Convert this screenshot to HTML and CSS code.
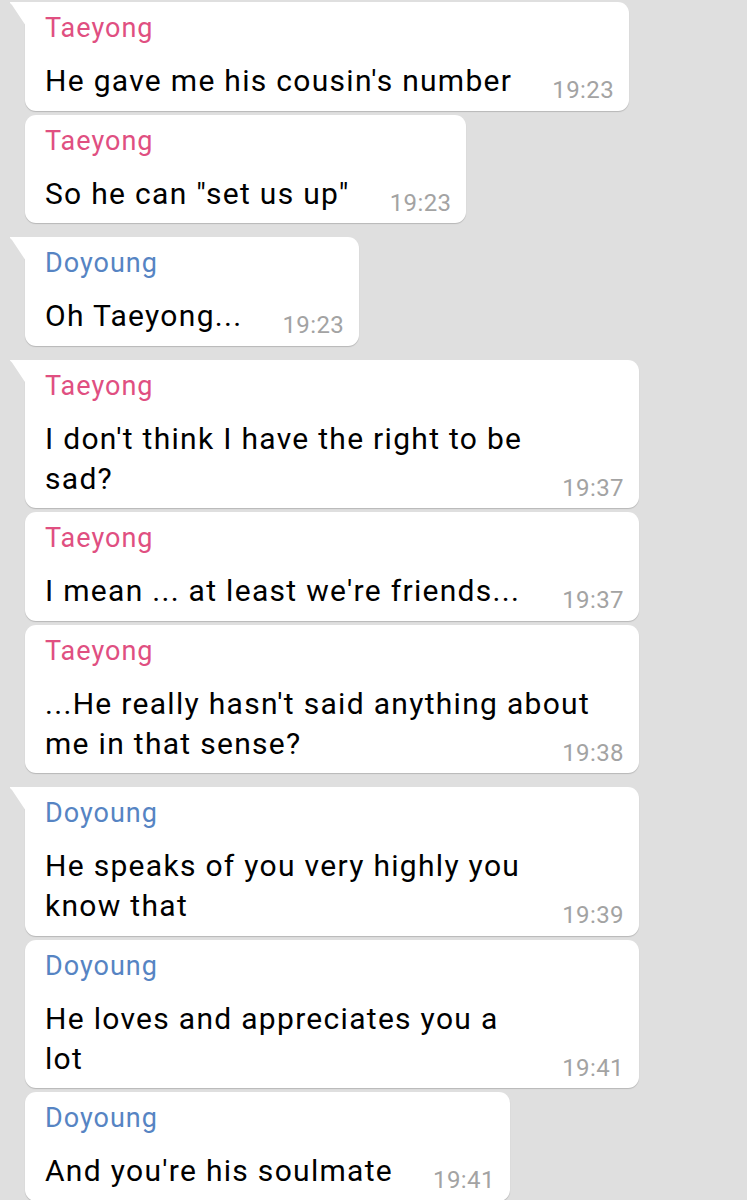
FILE: index.html
```html
<!doctype html>
<html lang="en">
<head>

<meta charset="utf-8">

<title>Chat</title>

<link rel="stylesheet" href="styles.css">

</head>
<body>

<div class="chat">
	<div class="msg --first --pink">
		<div class="name">Taeyong</div>
		<div class="text">He gave me his cousin's number<span class="time">19:23</span></div>
	</div>
	<div class="msg --pink">
		<div class="name">Taeyong</div>
		<div class="text">So he can "set us up"<span class="time">19:23</span></div>
	</div>

	<div class="msg --first --blue">
		<div class="name">Doyoung</div>
		<div class="text">Oh Taeyong...<span class="time">19:23</span></div>
	</div>

	<div class="msg --first --pink --wide">
		<div class="name">Taeyong</div>
		<div class="text">I don't think I have the right to be<br>sad?<span class="time">19:37</span></div>
	</div>
	<div class="msg --pink --wide">
		<div class="name">Taeyong</div>
		<div class="text">I mean ... at least we're friends...<span class="time">19:37</span></div>
	</div>
	<div class="msg --pink --wide">
		<div class="name">Taeyong</div>
		<div class="text">...He really hasn't said anything about<br>me in that sense?<span class="time">19:38</span></div>
	</div>

	<div class="msg --first --blue --wide">
		<div class="name">Doyoung</div>
		<div class="text">He speaks of you very highly you<br>know that<span class="time">19:39</span></div>
	</div>
	<div class="msg --blue --wide">
		<div class="name">Doyoung</div>
		<div class="text">He loves and appreciates you a<br>lot<span class="time">19:41</span></div>
	</div>
	<div class="msg --blue">
		<div class="name">Doyoung</div>
		<div class="text">And you're his soulmate<span class="time">19:41</span></div>
	</div>
</div>

</body>
</html>
```

FILE: styles.css
```css
html, body {
	margin: 0;
	padding: 0;
	background: #dfdfdf;
}

body {
	font-family: Roboto, "Liberation Sans", sans-serif;
	color: #000;
	overflow: hidden;
}

.chat {
	display: flex;
	flex-direction: column;
	align-items: flex-start;
	padding: 2px 0 0 25px;
}

.msg {
	position: relative;
	display: inline-block;
	box-sizing: border-box;
	max-width: 614px;
	margin-top: 4px;
	padding: 9px 15px 9.5px 20px;
	background: #fff;
	border-radius: 11px;
	box-shadow: 0 1px 1px rgba(0, 0, 0, 0.18);
}

.msg.--first {
	margin-top: 14px;
	border-top-left-radius: 0;
}
.msg.--first:first-child {
	margin-top: 0;
}

/* little tail on the first bubble of a group */
.msg.--first::before {
	content: "";
	position: absolute;
	top: 0;
	left: -15px;
	width: 16px;
	height: 24px;
	background: #fff;
	clip-path: polygon(0 0, 100% 0, 100% 100%, 2px 3px, 0 1px);
}

.msg.--wide {
	width: 614px;
}

.name {
	font-size: 27px;
	line-height: 34px;
	letter-spacing: 1px;
	margin-bottom: 16px;
	white-space: nowrap;
}

.--pink .name {
	color: #e04f81;
}
.--blue .name {
	color: #5684c3;
}

.text {
	font-size: 30px;
	line-height: 40px;
	letter-spacing: 1.3px;
	white-space: nowrap;
}

.time {
	float: right;
	font-size: 24px;
	line-height: 40px;
	letter-spacing: 0.4px;
	margin: 9px 0 -9px 40px;
	color: #a3a3a3;
}
```
